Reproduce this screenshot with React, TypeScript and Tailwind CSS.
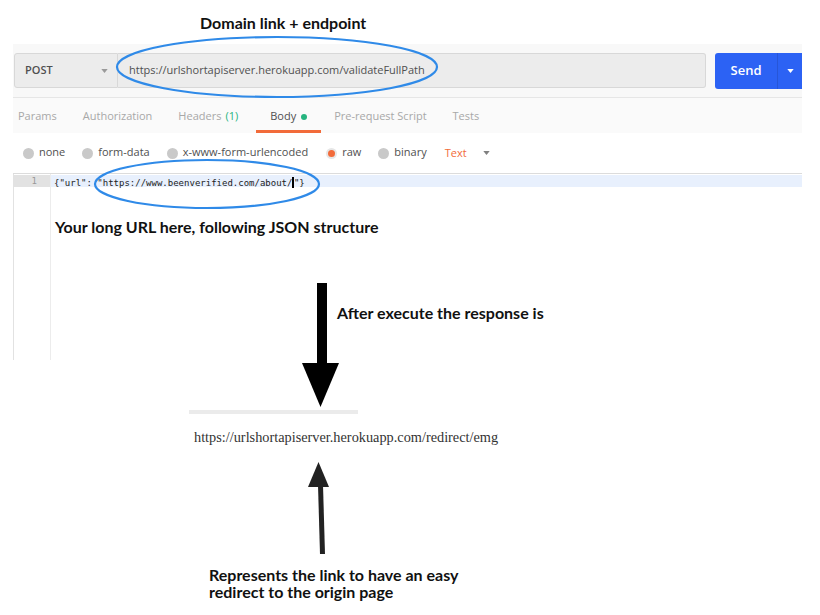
import React from "react";

const tabs = [
  { label: "Params" },
  { label: "Authorization" },
  { label: "Headers", badge: "(1)" },
  { label: "Body", active: true },
  { label: "Pre-request Script" },
  { label: "Tests" },
];

const bodyModes = [
  { label: "none", x: "ml-[10px]" },
  { label: "form-data", x: "ml-[17px]" },
  { label: "x-www-form-urlencoded", x: "ml-[17px]" },
  { label: "raw", x: "ml-[18px]", checked: true },
  { label: "binary", x: "ml-[17px]" },
];

function Caret({ className }: { className?: string }) {
  return (
    <svg viewBox="0 0 8 5" className={className} fill="currentColor">
      <path d="M0 0h8L4 5z" />
    </svg>
  );
}

function Radio({ checked }: { checked?: boolean }) {
  if (checked)
    return (
      <span className="flex h-[11px] w-[11px] items-center justify-center rounded-full bg-[#e6e6e6]">
        <span className="h-[7px] w-[7px] rounded-full bg-[#f26b3a]" />
      </span>
    );
  return <span className="h-[11px] w-[11px] rounded-full bg-[#c9c9c9]" />;
}

// annotations drawn over the screenshot: ellipses + arrows
function Overlay() {
  return (
    <svg
      className="pointer-events-none absolute inset-0"
      width={820}
      height={615}
      viewBox="0 0 820 615"
    >
      <ellipse cx={277} cy={67} rx={160} ry={30} fill="none" stroke="#2f8ae8" strokeWidth={2.2} />
      <ellipse cx={207} cy={184} rx={112} ry={24} fill="none" stroke="#2f8ae8" strokeWidth={2.2} />
      {/* down arrow */}
      <rect x={317} y={283} width={10} height={82} fill="#000" />
      <path d="M302 363H339L320.5 407Z" fill="#000" />
      {/* up arrow */}
      <path d="M318.5 462L329 487H308Z" fill="#222" />
      <path d="M318 485L323 485L325 554L320 554Z" fill="#222" />
    </svg>
  );
}

export default function App() {
  return (
    <div className="relative h-[615px] w-[820px] overflow-hidden bg-white font-['Open_Sans',sans-serif]">
      <div className="h-[44px] pl-[200px] pt-[13px] font-['Lato',sans-serif] text-[16px] font-bold leading-[20px] text-[#111]">
        Domain link + endpoint
      </div>

      <div className="ml-[13px] w-[789px]">
        {/* request bar */}
        <div className="flex h-[53px] items-center bg-[#f8f8f8] pl-[1px]">
          <div className="flex h-[35px] w-[104px] items-center justify-between rounded-l-[3px] border border-[#d8d8d8] bg-[#ececec] pl-[10px] pr-[9px] text-[11px] font-semibold text-[#505050]">
            POST
            <Caret className="h-[4px] w-[7px] text-[#9a9a9a]" />
          </div>
          <div className="flex h-[35px] w-[588px] items-center rounded-r-[3px] border border-l-0 border-[#d8d8d8] bg-[#ececec] pl-[11px] text-[11px] text-[#505050]">
            https://urlshortapiserver.herokuapp.com/validateFullPath
          </div>
          <div className="ml-[9px] flex h-[36px] flex-1 items-stretch rounded-l-[3px] bg-[#2c62f4] text-white">
            <div className="flex w-[62px] items-center justify-center text-[13px] font-semibold">Send</div>
            <div className="flex flex-1 items-center justify-center border-l border-[#2756d8]">
              <Caret className="h-[4px] w-[7px]" />
            </div>
          </div>
        </div>

        {/* tabs */}
        <div className="flex h-[36px] items-stretch border-t border-[#e6e6e6] bg-[#fafafa] pl-[5px] pt-[5px] text-[11px] text-[#a8a8a8]">
          {tabs.map((t, i) => (
            <div
              key={t.label}
              className={
                "flex items-center border-b-[3px] " +
                (i === 0 ? "pr-[13px] " : t.active ? "ml-[5px] px-[14px] " : "px-[13px] ") +
                (t.active ? "border-[#f26b3a] text-[#505050]" : "border-transparent")
              }
            >
              {t.label}
              {t.badge && <span className="ml-[4px] text-[#26b47f]">{t.badge}</span>}
              {t.active && <span className="ml-[5px] h-[6px] w-[6px] rounded-full bg-[#26b47f]" />}
            </div>
          ))}
        </div>

        {/* body modes */}
        <div className="flex h-[41px] items-center border-b border-[#dcdcdc] bg-white text-[11px] text-[#505050]">
          {bodyModes.map((m) => (
            <div key={m.label} className={"flex items-center gap-[5px] " + m.x}>
              <Radio checked={m.checked} />
              <span className="-mt-[1px]">{m.label}</span>
            </div>
          ))}
          <span className="ml-[18px] text-[#f26b3a]">Text</span>
          <Caret className="ml-[16px] h-[4px] w-[7px] text-[#808080]" />
        </div>

        {/* editor */}
        <div className="flex h-[186px] border-l border-[#e2e2e2]">
          <div className="w-[37px] border-r border-[#ececec] bg-white">
            <div className="mt-[1px] h-[12px] bg-[#e2e2e2] pr-[13px] text-right font-['DejaVu_Sans_Mono',monospace] text-[9px] leading-[12px] text-[#999]">
              1
            </div>
          </div>
          <div className="flex-1">
            <div className="mt-[1px] h-[12px] bg-[#e8f0fd] pl-[3px] font-['DejaVu_Sans_Mono',monospace] text-[9px] leading-[12px] text-[#222]">
              {'{"url": "https://www.beenverified.com/about/'}
              <span className="inline-block h-[11px] w-[1.5px] translate-y-[2px] bg-black" />
              {'"}'}
            </div>
            <div className="mt-[30px] pl-[4px] font-['Lato',sans-serif] text-[16px] font-bold leading-[20px] text-[#111]">
              Your long URL here, following JSON structure
            </div>
            <div className="mt-[66px] pl-[286px] font-['Lato',sans-serif] text-[16px] font-bold leading-[20px] text-[#111]">
              After execute the response is
            </div>
          </div>
        </div>
      </div>

      {/* response */}
      <div className="ml-[189px] mt-[50px] h-[4px] w-[169px] bg-[#ebebeb]" />
      <div className="ml-[194px] mt-[14px] font-['Liberation_Serif',serif] text-[14.3px] leading-[18px] text-[#333]">
        https://urlshortapiserver.herokuapp.com/redirect/emg
      </div>

      <div className="ml-[209px] mt-[120px] font-['Lato',sans-serif] text-[16px] font-bold leading-[17px] text-[#111]">
        Represents the link to have an easy
        <br />
        redirect to the origin page
      </div>

      <Overlay />
    </div>
  );
}
